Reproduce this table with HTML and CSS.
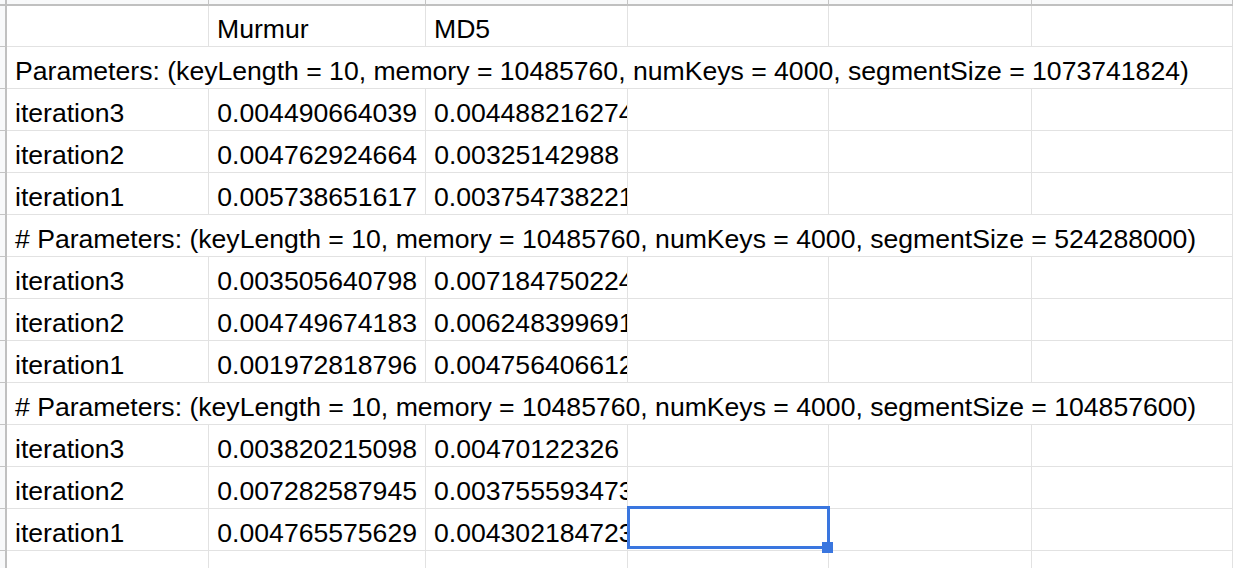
FILE: index.html
```html
<!DOCTYPE html>
<html>
<head>
<meta charset="utf-8">
<title>Sheet</title>
<link rel="stylesheet" href="styles.css">
</head>
<body>
<div class="sheet">
  <div class="row head">
    <div class="rh"></div>
    <div class="ch a"></div><div class="ch b"></div><div class="ch c"></div><div class="ch d"></div><div class="ch e"></div><div class="ch f"></div>
  </div>
  <div class="row first">
    <div class="rh"></div>
    <div class="cell a"></div><div class="cell b">Murmur</div><div class="cell c">MD5</div><div class="cell d"></div><div class="cell e"></div><div class="cell f"></div>
  </div>
  <div class="row">
    <div class="rh"></div>
    <div class="cell span">Parameters: (keyLength = 10, memory = 10485760, numKeys = 4000, segmentSize = 1073741824)</div>
  </div>
  <div class="row">
    <div class="rh"></div>
    <div class="cell a">iteration3</div><div class="cell b num">0.004490664039</div><div class="cell c">0.004488216274</div><div class="cell d"></div><div class="cell e"></div><div class="cell f"></div>
  </div>
  <div class="row">
    <div class="rh"></div>
    <div class="cell a">iteration2</div><div class="cell b num">0.004762924664</div><div class="cell c num">0.00325142988</div><div class="cell d"></div><div class="cell e"></div><div class="cell f"></div>
  </div>
  <div class="row">
    <div class="rh"></div>
    <div class="cell a">iteration1</div><div class="cell b num">0.005738651617</div><div class="cell c">0.003754738221</div><div class="cell d"></div><div class="cell e"></div><div class="cell f"></div>
  </div>
  <div class="row">
    <div class="rh"></div>
    <div class="cell span"># Parameters: (keyLength = 10, memory = 10485760, numKeys = 4000, segmentSize = 524288000)</div>
  </div>
  <div class="row">
    <div class="rh"></div>
    <div class="cell a">iteration3</div><div class="cell b num">0.003505640798</div><div class="cell c">0.007184750224</div><div class="cell d"></div><div class="cell e"></div><div class="cell f"></div>
  </div>
  <div class="row">
    <div class="rh"></div>
    <div class="cell a">iteration2</div><div class="cell b num">0.004749674183</div><div class="cell c">0.006248399691</div><div class="cell d"></div><div class="cell e"></div><div class="cell f"></div>
  </div>
  <div class="row">
    <div class="rh"></div>
    <div class="cell a">iteration1</div><div class="cell b num">0.001972818796</div><div class="cell c">0.004756406612</div><div class="cell d"></div><div class="cell e"></div><div class="cell f"></div>
  </div>
  <div class="row">
    <div class="rh"></div>
    <div class="cell span"># Parameters: (keyLength = 10, memory = 10485760, numKeys = 4000, segmentSize = 104857600)</div>
  </div>
  <div class="row">
    <div class="rh"></div>
    <div class="cell a">iteration3</div><div class="cell b num">0.003820215098</div><div class="cell c num">0.00470122326</div><div class="cell d"></div><div class="cell e"></div><div class="cell f"></div>
  </div>
  <div class="row">
    <div class="rh"></div>
    <div class="cell a">iteration2</div><div class="cell b num">0.007282587945</div><div class="cell c">0.003755593473</div><div class="cell d"></div><div class="cell e"></div><div class="cell f"></div>
  </div>
  <div class="row">
    <div class="rh"></div>
    <div class="cell a">iteration1</div><div class="cell b num">0.004765575629</div><div class="cell c">0.004302184723</div><div class="cell d sel"><span class="sel-box"></span><span class="sel-handle"></span></div><div class="cell e"></div><div class="cell f"></div>
  </div>
  <div class="row">
    <div class="rh"></div>
    <div class="cell a"></div><div class="cell b"></div><div class="cell c"></div><div class="cell d"></div><div class="cell e"></div><div class="cell f"></div>
  </div>
</div>
</body>
</html>
```

FILE: styles.css
```css
html, body {
  margin: 0;
  padding: 0;
  background: #ffffff;
}
body {
  font-family: "Liberation Sans", Arial, sans-serif;
  font-size: 26.6px;
  color: #000000;
  overflow: hidden;
}
.sheet {
  display: flex;
  flex-direction: column;
  width: 1234px;
}
.row {
  display: flex;
  flex: none;
  height: 42px;
}
.row.first {
  height: 41px;
}
.row.head {
  height: 6px;
}
.rh {
  flex: none;
  width: 7px;
  box-sizing: border-box;
  background: #f8f9fa;
  border-right: 2px solid #c0c0c0;
  border-bottom: 1px solid #c4c4c4;
}
.head .rh {
  border-bottom: 2px solid #c0c0c0;
}
.ch {
  flex: none;
  box-sizing: border-box;
  background: #f8f9fa;
  border-right: 1px solid #c4c4c4;
  border-bottom: 2px solid #c0c0c0;
}
.cell {
  flex: none;
  box-sizing: border-box;
  display: flex;
  align-items: flex-end;
  padding: 0 8px 1px 8px;
  border-right: 1px solid #e2e2e2;
  border-bottom: 1px solid #e2e2e2;
  white-space: nowrap;
  overflow: hidden;
}
.a { width: 202px; }
.b { width: 217px; }
.c { width: 202px; }
.d { width: 201px; }
.e { width: 203px; }
.f { width: 201px; }
.span { width: 1226px; }
.num { justify-content: flex-end; }
.sel {
  position: relative;
  overflow: visible;
}
.sel-box {
  position: absolute;
  left: -1px;
  top: -3px;
  width: 203px;
  height: 43px;
  box-sizing: border-box;
  border: 3px solid #3a76df;
}
.sel-handle {
  position: absolute;
  left: 194px;
  top: 33px;
  width: 11px;
  height: 11px;
  background: #3a76df;
}
```
